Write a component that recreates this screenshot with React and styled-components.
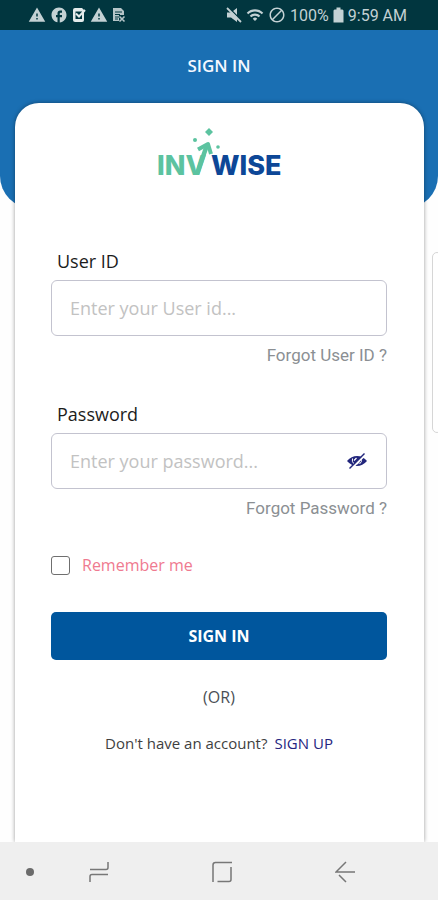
import React, { useState } from 'react';
import styled, { createGlobalStyle } from 'styled-components';
import { MdBlock, MdFacebook, MdWarning, MdWifi } from 'react-icons/md';

const GlobalStyle = createGlobalStyle`
    *, *::before, *::after {
        box-sizing: border-box;
    }
    body {
        margin: 0;
        background: #fefefe;
        font-family: 'Open Sans', 'Noto Sans', sans-serif;
    }
`

const Screen = styled.div`
    position: relative;
    display: flex;
    flex-direction: column;
    min-height: 100vh;
    overflow: hidden;
`

const StatusBarStyle = styled.div`
    display: flex;
    align-items: center;
    justify-content: space-between;
    height: 30px;
    padding: 0 31px 0 28px;
    background: #01363f;
    color: #c3d1d4;
    font-family: Roboto, sans-serif;
    font-size: 16px;
    svg {
        display: block;
    }
    .statusBar__notifications {
        display: flex;
        align-items: center;
        gap: 4px;
    }
    .statusBar__system {
        display: flex;
        align-items: center;
        gap: 4px;
    }
`

const Header = styled.header`
    height: 178px;
    padding-top: 24px;
    border-radius: 0 0 32px 32px;
    background: #1a6fb3;
    text-align: center;
`

const HeaderTitle = styled.h1`
    margin: 0;
    color: #f4f8ff;
    font-size: 17px;
    font-weight: 600;
    line-height: 24px;
`

const Card = styled.main`
    flex: 1;
    margin: -105px 14px 0 15px;
    padding: 25px 37px 32px 36px;
    border-radius: 24px 24px 0 0;
    background: #fff;
    box-shadow: 0 0 4px rgba(0, 0, 0, 0.4);
`

const LogoStyle = styled.svg`
    display: block;
    margin: 0 auto 65px;
    font-family: Inter, sans-serif;
    font-size: 27px;
    font-weight: 800;
`

const Form = styled.form`
    display: flex;
    flex-direction: column;
`

const FieldStyle = styled.div`
    display: flex;
    flex-direction: column;
    margin-bottom: 37px;
    label {
        margin-bottom: 7px;
        padding-left: 6px;
        color: #1c1c1c;
        font-size: 18px;
        line-height: 24px;
    }
`

const InputBox = styled.div`
    display: flex;
    align-items: center;
    height: 56px;
    padding: 0 18px;
    border: 1px solid #c3c3cf;
    border-radius: 6px;
    background: #fff;
    input {
        flex: 1;
        min-width: 0;
        padding: 0;
        border: 0;
        outline: 0;
        background: none;
        color: #1c1c1c;
        font-family: inherit;
        font-size: 18px;
    }
    input::placeholder {
        color: #c2c2c2;
        opacity: 1;
    }
`

const EyeButton = styled.button`
    display: flex;
    padding: 0;
    border: 0;
    background: none;
    cursor: pointer;
`

const ForgotLink = styled.a`
    align-self: flex-end;
    margin-top: 9px;
    color: #8b8f93;
    font-family: Roboto, sans-serif;
    font-size: 17px;
    line-height: 20px;
    text-decoration: none;
`

const Remember = styled.label`
    display: flex;
    align-items: center;
    gap: 12px;
    margin-bottom: 37px;
    color: #ef7a90;
    font-size: 16px;
    line-height: 20px;
    input {
        appearance: none;
        width: 19px;
        height: 19px;
        margin: 0;
        border: 1px solid #6f6f6f;
        border-radius: 3px;
        background: #fff;
    }
    input:checked {
        background: #00569d;
    }
`

const SubmitButton = styled.button`
    height: 48px;
    border: 0;
    border-radius: 5px;
    background: #00569d;
    color: #fff;
    font-family: inherit;
    font-size: 16px;
    font-weight: 700;
    cursor: pointer;
`

const Divider = styled.p`
    margin: 27px 0 26px;
    color: #4a4f55;
    font-size: 16px;
    line-height: 20px;
    text-align: center;
`

const SignUpText = styled.p`
    display: flex;
    justify-content: center;
    gap: 7px;
    margin: 0;
    color: #3f3f3f;
    font-size: 15px;
    line-height: 20px;
    white-space: nowrap;
    a {
        color: #25257f;
        font-weight: 500;
        text-decoration: none;
    }
`

const EdgeHandle = styled.div`
    position: absolute;
    top: 252px;
    right: -4px;
    width: 10px;
    height: 181px;
    border: 1px solid #d6d6d6;
    border-radius: 8px;
    background: #fff;
`

const NavBar = styled.nav`
    display: flex;
    align-items: center;
    justify-content: space-between;
    position: relative;
    height: 58px;
    padding: 2px 83px 0 26px;
    background: #efefef;
    button {
        display: flex;
        padding: 0;
        border: 0;
        background: none;
    }
    button:first-child {
        margin-right: -48px;
    }
`

const ChecklistIcon = () => (
    <svg width="14" height="16" viewBox="0 0 14 16">
        <path d="M3 1H10L12 3V13Q12 15 10 15H3Q1 15 1 13V3Q1 1 3 1Z" fill="#e4eaeb" />
        <rect x="3.500" y="4.500" width="6.500" height="7.500" fill="#01363f" />
        <path d="M4 6.500L7 9.500L13 3" fill="none" stroke="#e4eaeb" strokeWidth="2" />
    </svg>
)

const DocumentIcon = () => (
    <svg width="15" height="16" viewBox="0 0 15 16">
        <path d="M1 1H9L12 4V8H7V14H1Z" fill="#b5c5c8" />
        <path d="M3 5H10M3 7.500H8M3 10H7M3 12H6" stroke="#01363f" />
        <path d="M7.500 9.500L12.500 14.500M12.500 9.500L7.500 14.500" stroke="#b5c5c8" strokeWidth="1.600" />
    </svg>
)

const MuteIcon = () => (
    <svg width="16" height="16" viewBox="0 0 16 16">
        <path d="M1 5.500H5L11 1V15L5 10.500H1Z" fill="#c3d1d4" />
        <path d="M2.500 0.500L15.500 13.500" stroke="#01363f" strokeWidth="1.500" />
        <path d="M1 1L15 15" stroke="#c3d1d4" strokeWidth="1.800" />
    </svg>
)

const BatteryIcon = () => (
    <svg width="11" height="16" viewBox="0 0 11 16">
        <path d="M3.500 0.500H7.500V2.500H9.500L10.500 3.500V15.500H0.500V3.500L1.500 2.500H3.500Z" fill="#c3d1d4" />
    </svg>
)

const EyeOffIcon = () => (
    <svg width="22" height="18" viewBox="0 0 22 18">
        <path d="M1 9Q5.500 4 11 4T21 9Q16.500 14 11 14T1 9Z" fill="#22267c" />
        <path d="M6.500 6.500Q5.500 9.500 8 12M15 6.500Q16.500 10 13.500 12" fill="none" stroke="#fff" />
        <path d="M10.500 6L8 8.500M13.500 9.500L11 12" stroke="#fff" strokeWidth="1.200" />
        <path d="M5 17L19.500 2.500" stroke="#fff" strokeWidth="2" />
        <path d="M3.500 16.500L18.500 1.500" stroke="#22267c" strokeWidth="1.500" />
    </svg>
)

const Logo = () => (
    <LogoStyle width="136" height="56" viewBox="-6 0 136 56" role="img" aria-label="INVWISE">
        <text x="0" y="47" fill="#5cc3a0">INV</text>
        <text x="54" y="47" fill="#0d4797">WISE</text>
        <path d="M40 46L50 17" stroke="#5cc3a0" strokeWidth="4.500" />
        <path d="M41 21.500L51 16L54 26" fill="none" stroke="#5cc3a0" strokeWidth="4" strokeLinejoin="round" />
        <path d="M52 0L56 4L52 8L48 4Z" fill="#5cc3a0" />
        <circle cx="38" cy="12" r="2" fill="#5cc3a0" />
        <circle cx="61" cy="19" r="1.800" fill="#5cc3a0" />
    </LogoStyle>
)

function StatusBar() {
    return (
        <StatusBarStyle>
            <div className="statusBar__notifications">
                <MdWarning size={18} />
                <MdFacebook size={18} />
                <ChecklistIcon />
                <MdWarning size={18} />
                <DocumentIcon />
            </div>
            <div className="statusBar__system">
                <MuteIcon />
                <MdWifi size={18} />
                <MdBlock size={18} />
                <span>100%</span>
                <BatteryIcon />
                <span>9:59 AM</span>
            </div>
        </StatusBarStyle>
    )
}

function Field({ id, label, type, placeholder, forgot, children }) {
    return (
        <FieldStyle>
            <label htmlFor={id}>{label}</label>
            <InputBox>
                <input id={id} type={type} placeholder={placeholder} />
                {children}
            </InputBox>
            <ForgotLink href="#">{forgot}</ForgotLink>
        </FieldStyle>
    )
}

export default function App() {
    const [showPassword, setShowPassword] = useState(false);

    return (
        <Screen>
            <GlobalStyle />
            <StatusBar />
            <Header>
                <HeaderTitle>SIGN IN</HeaderTitle>
            </Header>
            <Card>
                <Logo />
                <Form onSubmit={(e) => e.preventDefault()}>
                    <Field id="userId" label="User ID" type="text" placeholder="Enter your User id..." forgot="Forgot User ID ?" />
                    <Field
                        id="password"
                        label="Password"
                        type={showPassword ? 'text' : 'password'}
                        placeholder="Enter your password..."
                        forgot="Forgot Password ?"
                    >
                        <EyeButton type="button" aria-label="Show password" onClick={() => setShowPassword(!showPassword)}>
                            <EyeOffIcon />
                        </EyeButton>
                    </Field>
                    <Remember>
                        <input type="checkbox" />
                        Remember me
                    </Remember>
                    <SubmitButton type="submit">SIGN IN</SubmitButton>
                </Form>
                <Divider>(OR)</Divider>
                <SignUpText>
                    Don't have an account? <a href="#">SIGN UP</a>
                </SignUpText>
            </Card>
            <EdgeHandle />
            <NavBar>
                <button type="button" aria-label="Hide bar">
                    <svg width="8" height="8"><circle cx="4" cy="4" r="4" fill="#6b6b6b" /></svg>
                </button>
                <button type="button" aria-label="Recents">
                    <svg width="20" height="22" fill="none" stroke="#777" strokeWidth="1.500">
                        <path d="M1 8.500H17Q19 8.500 19 6.500V1M19 13.500H3Q1 13.500 1 15.500V21" />
                    </svg>
                </button>
                <button type="button" aria-label="Home">
                    <svg width="20" height="22" fill="none" stroke="#777" strokeWidth="1.500">
                        <path d="M1 21V4Q1 1.500 3.500 1.500H20M19 6V18.500Q19 20.500 17 20.500H5.500" />
                    </svg>
                </button>
                <button type="button" aria-label="Back">
                    <svg width="20" height="22" fill="none" stroke="#777" strokeWidth="1.500">
                        <path d="M11 1L1 11H20M4 14L11 21" />
                    </svg>
                </button>
            </NavBar>
        </Screen>
    )
}
